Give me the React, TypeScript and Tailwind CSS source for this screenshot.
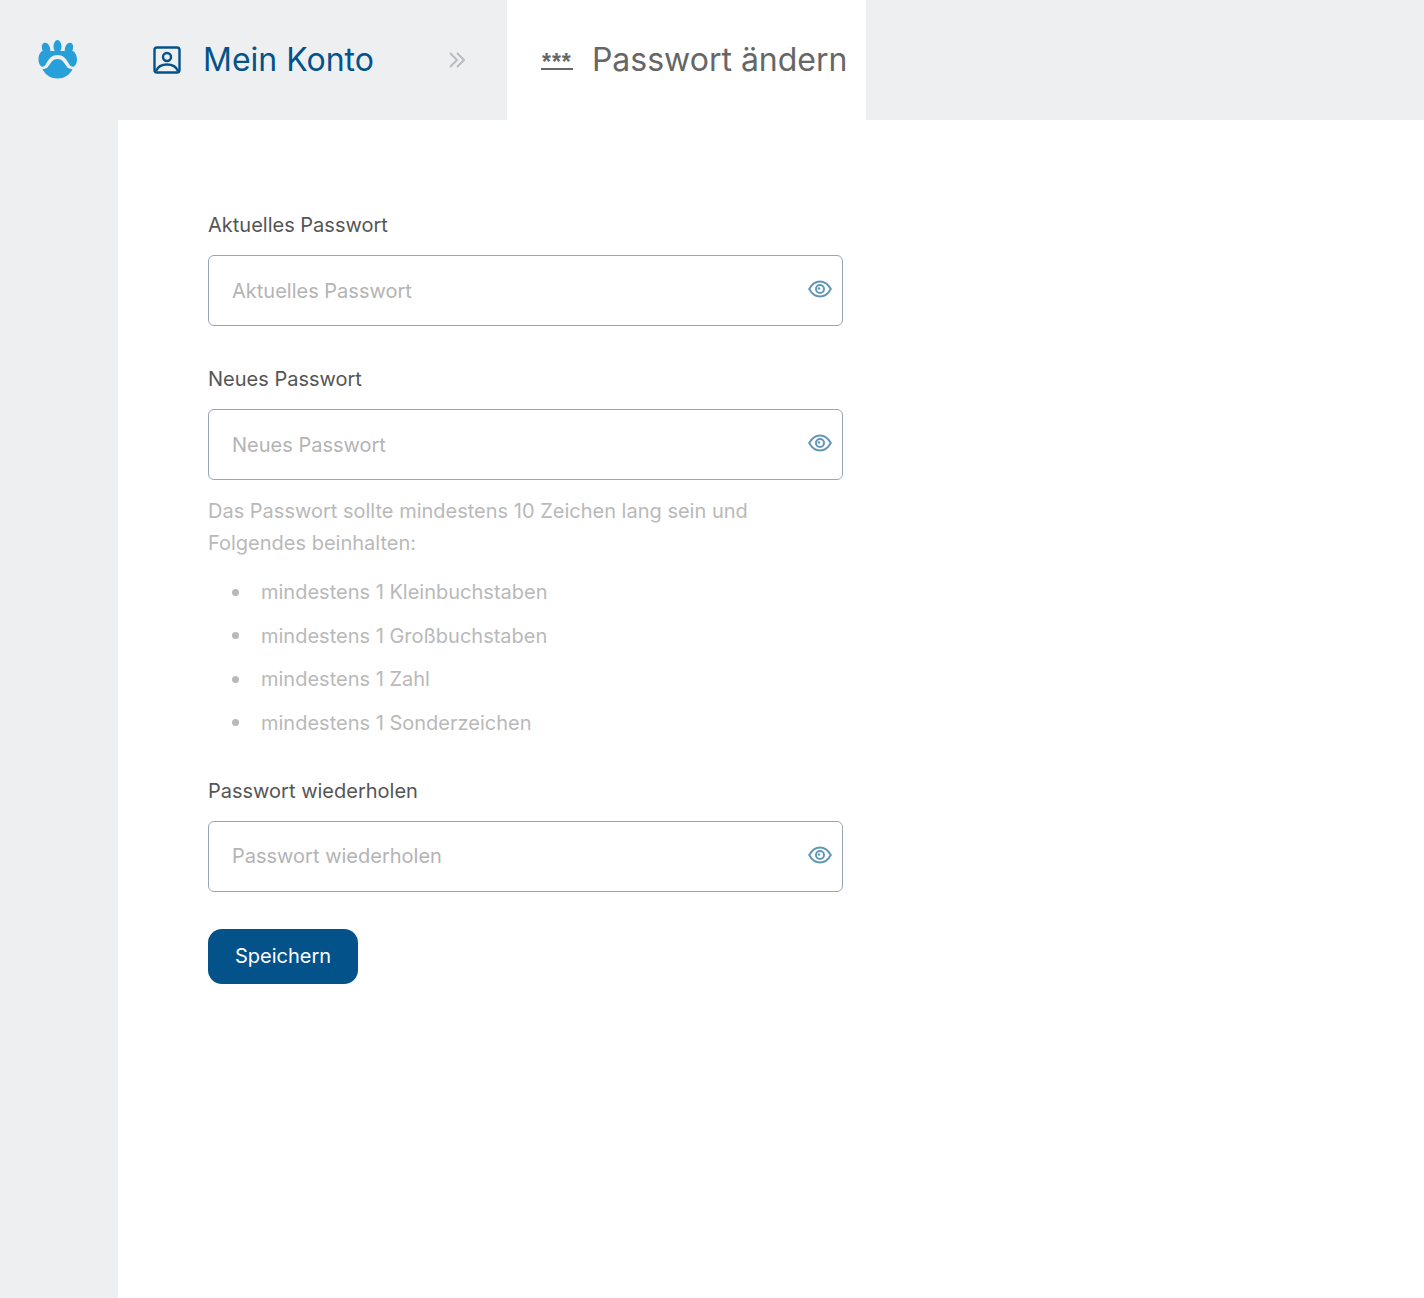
import { useState } from "react";

const requirements = [
  "mindestens 1 Kleinbuchstaben",
  "mindestens 1 Großbuchstaben",
  "mindestens 1 Zahl",
  "mindestens 1 Sonderzeichen",
];

function PawLogo() {
  return (
    <svg width="40" height="40" viewBox="0 0 40 40" fill="#279fd8">
      <ellipse cx="8" cy="8.5" rx="4" ry="6" transform="rotate(-18 8 8.5)" />
      <ellipse cx="19.5" cy="6.5" rx="4" ry="6.5" />
      <ellipse cx="31" cy="8.5" rx="4" ry="6" transform="rotate(18 31 8.5)" />
      <path d="M4 11 C0 14 -0.5 21 2 25 C4 28 6 27 8 24 C10 20 13 15 19.5 15 C26 15 29 20 31 24 C33 27 35.5 28 37.5 25 C40 21 39.5 14 35 11 Z" />
      <path d="M19.5 19 C14 19 12.5 24 9 28 L4.5 29.5 C8 35.5 13 38.5 19.5 38.5 C26 38.5 31 35.5 34.5 29.5 L30 28 C26.5 24 25 19 19.5 19 Z" />
    </svg>
  );
}

function AccountIcon() {
  return (
    <svg width="30" height="30" viewBox="0 0 30 30" fill="none" stroke="#03538a" strokeWidth="2.4">
      <rect x="2.5" y="2.5" width="25" height="25" rx="2.5" />
      <circle cx="15" cy="12" r="4" />
      <path d="M4 26 C6 21 10 19.5 15 19.5 C20 19.5 24 21 26 26" />
    </svg>
  );
}

function StarsIcon() {
  return (
    <div className="flex w-[36px] flex-col items-center">
      <span className="h-[16px] text-[23px] leading-[24px] font-bold tracking-[1px] text-[#666666] font-['Liberation_Sans',sans-serif]">***</span>
      <span className="mt-[2px] h-[2px] w-[32px] bg-[#666666]" />
    </div>
  );
}

function EyeIcon() {
  return (
    <svg width="24" height="18" viewBox="0 0 24 18" fill="none" stroke="#6397b8" strokeWidth="2">
      <path d="M1.2 9 C4 4 8 1.5 12 1.5 C16 1.5 20 4 22.8 9 C20 14 16 16.5 12 16.5 C8 16.5 4 14 1.2 9 Z" />
      <circle cx="12" cy="9" r="4" />
      <circle cx="11" cy="8.5" r="1.2" fill="#6397b8" stroke="none" />
    </svg>
  );
}

function PasswordField({ label }: { label: string }) {
  const [value, setValue] = useState("");
  const [visible, setVisible] = useState(false);

  return (
    <div>
      <label className="block h-[30px] text-[20px] leading-[30px] text-[#555555]">{label}</label>
      <div className="relative mt-[15px]">
        <input
          type={visible ? "text" : "password"}
          value={value}
          onChange={(e) => setValue(e.target.value)}
          placeholder={label}
          className="block h-[71px] w-full rounded-[6px] border border-[#97a6b5] bg-white pr-[50px] pl-[23px] text-[20px] text-[#555555] outline-none placeholder:text-[#b4b4b4]"
        />
        <button
          type="button"
          onClick={() => setVisible(!visible)}
          aria-label="Passwort anzeigen"
          className="absolute top-[25px] right-[11px] flex"
        >
          <EyeIcon />
        </button>
      </div>
    </div>
  );
}

export default function App() {
  return (
    <div className="flex min-h-[1298px] flex-col bg-[#eeeff1] font-['Inter',sans-serif]">
      <header className="flex h-[120px] items-center">
        <div className="flex w-[118px] justify-center pr-[3px]">
          <PawLogo />
        </div>
        <div className="flex items-center pl-[34px]">
          <AccountIcon />
          <span className="ml-[21px] text-[32px] leading-[40px] text-[#03538a]">Mein Konto</span>
        </div>
        <svg className="ml-[74px]" width="18" height="18" viewBox="0 0 18 18" fill="none" stroke="#b6bcc2" strokeWidth="2">
          <path d="M2 2 L9 9 L2 16 M9 2 L16 9 L9 16" />
        </svg>
        <div className="ml-[41px] flex h-full w-[359px] items-center bg-white pl-[32px]">
          <StarsIcon />
          <span className="ml-[17px] text-[32px] leading-[40px] text-[#666666]">Passwort ändern</span>
        </div>
      </header>

      <div className="flex flex-1 pl-[118px]">
        <main className="flex-1 bg-white pt-[90px] pl-[90px]">
          <form className="w-[635px]" onSubmit={(e) => e.preventDefault()}>
            <PasswordField label="Aktuelles Passwort" />
            <div className="mt-[38px]">
              <PasswordField label="Neues Passwort" />
            </div>
            <p className="mt-[15px] text-[20px] leading-[32px] text-[#b9b9b9]">
              Das Passwort sollte mindestens 10 Zeichen lang sein und Folgendes beinhalten:
            </p>
            <ul className="mt-[18px] flex flex-col gap-[13.6px]">
              {requirements.map((item) => (
                <li key={item} className="flex items-center text-[20px] leading-[30px] text-[#b9b9b9]">
                  <span className="ml-[24px] h-[7px] w-[7px] rounded-full bg-[#b9b9b9]" />
                  <span className="ml-[22px]">{item}</span>
                </li>
              ))}
            </ul>
            <div className="mt-[38px]">
              <PasswordField label="Passwort wiederholen" />
            </div>
            <button
              type="submit"
              className="mt-[37px] h-[55px] w-[150px] rounded-[14px] bg-[#03538a] text-[20px] text-white"
            >
              Speichern
            </button>
          </form>
        </main>
      </div>
    </div>
  );
}
